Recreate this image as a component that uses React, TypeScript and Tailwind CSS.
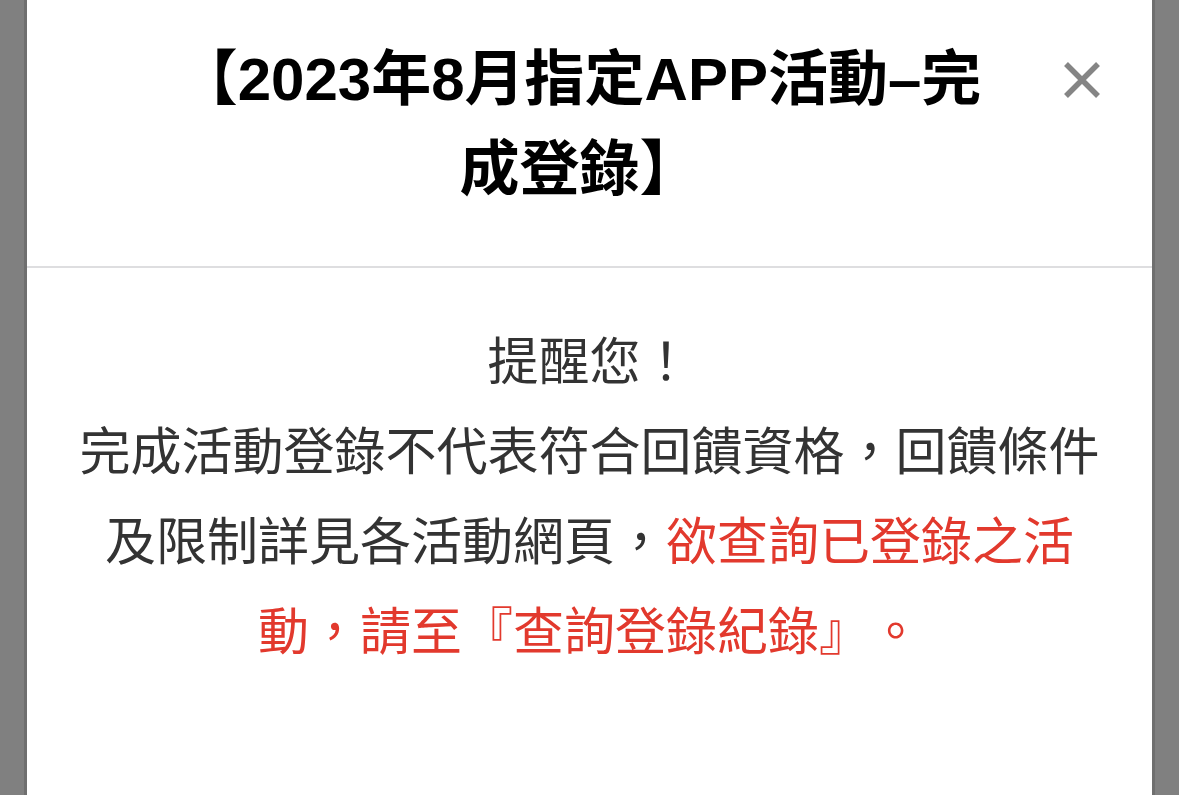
const CloseIcon = () => (
  <svg width="38" height="38" viewBox="0 0 38 38" className="shrink-0">
    <path d="M3 3L35 35M35 3L3 35" stroke="currentColor" strokeWidth="5.5" />
  </svg>
);

const App = () => {
  return (
    <div className="flex h-[795px] w-full justify-center overflow-hidden bg-[#808080] font-['Liberation_Sans','Noto_Sans_CJK_TC',sans-serif] [text-spacing-trim:space-all]">
      <div className="flex h-full w-[1125px] flex-col bg-white shadow-[-3px_0_0_#6f6f6f,3px_0_0_#6f6f6f]">
        {/* Header */}
        <div className="relative border-b-2 border-[#dedee0] pt-[35px] pb-[51px] pl-[140px] pr-[160px]">
          <h2 className="text-center text-[60px] font-bold leading-[90px] text-black">
            【2023年8月指定APP活動–完成登錄】
          </h2>
          <button className="absolute right-[51px] top-[61px] flex h-[38px] w-[38px] items-center justify-center text-[#858585]">
            <CloseIcon />
          </button>
        </div>

        {/* Body */}
        <div className="px-[45px] pt-[50px] text-center text-[51px] leading-[90px] text-[#333333]">
          <p>提醒您！</p>
          <p>
            完成活動登錄不代表符合回饋資格，回饋條件及限制詳見各活動網頁，
            <span className="text-[#e2392d]">欲查詢已登錄之活動，請至『查詢登錄紀錄』。</span>
          </p>
        </div>
      </div>
    </div>
  );
};

export default App;
